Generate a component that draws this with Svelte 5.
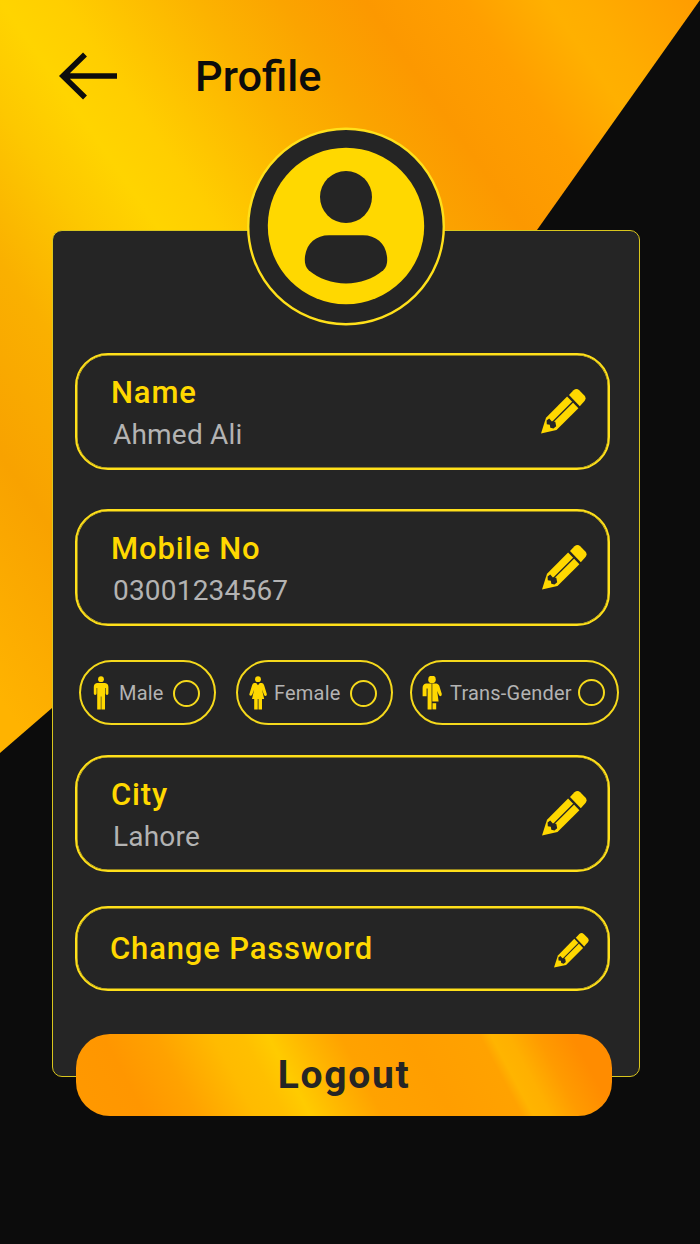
<script>
    let gender = $state('');

    const genders = [
        { id: 'male', label: 'Male' },
        { id: 'female', label: 'Female' },
        { id: 'trans', label: 'Trans-Gender' },
    ];
</script>

{#snippet pencil(size)}
    <svg class="pencil" width={size} height={size} viewBox="0 0 45 45">
        <path fill="#ffd800" d="M28 6 32.5 1.3Q35.5-1 38.2 1.2L43.4 6.4Q45.6 9 43.5 12L38.8 17.2Z"/>
        <path fill="#ffd800" d="M26.1 7.4 5 28.8 0 44.4 15.5 41.1 37.4 19.2Z"/>
        <path stroke="#252525" stroke-width="1.3" d="M31.8 13 11 33.8"/>
        <path fill="#252525" d="M5.6 31.4 8.2 29.6 10.9 32.5 14.3 32.8 15.2 37.2 12.5 39.5 9.3 38.7 8.8 35.8 5.8 35.2Z"/>
    </svg>
{/snippet}

{#snippet field(label, value)}
    <div class="field {label.toLowerCase()}">
        <div class="text">
            <div class="label">{label}</div>
            <div class="value">{value}</div>
        </div>
        {@render pencil(45)}
    </div>
{/snippet}

{#snippet person(id)}
    <svg class="person" width="20" height="34" viewBox="0 0 20 34" fill="#ffd800">
        {#if id === 'male'}
            <circle cx="10" cy="3.2" r="2.9"/>
            <path d="M6 7H14Q17.4 7.4 17.4 11V17.5Q17.4 18.9 16 18.9 14.6 18.9 14.6 17.5V12H14V33.4H10.4V20.5H9.8V33.4H6.2V12H5.6V17.5Q5.6 18.9 4.2 18.9 2.8 18.9 2.8 17.5V11Q2.8 7.4 6 7Z"/>
        {:else if id === 'female'}
            <circle cx="10" cy="3.2" r="2.9"/>
            <path d="M6 7H8.2L10 9.2 11.8 7H14Q15.6 7.2 16.2 9.5L18.8 18Q19 19.7 17.6 19.9 16.5 19.9 16 18.7L14 13.5 16.2 23H14V33.4H10.5V23H9.7V33.4H6.2V23H4L6.2 13.5 4.2 18.7Q3.6 19.9 2.5 19.8 1 19.6 1.4 18L4 9.5Q4.6 7.2 6 7Z"/>
        {:else}
            <circle cx="10" cy="3.4" r="3.8"/>
            <path d="M4 7.6H9.6V33.4H5.6V12.5H4.6V20.3H.6V12Q.6 8.2 4 7.6Z"/>
            <path d="M10.3 7.6H14.5Q17 8 17.8 11.5L19.8 18Q20 20 18.4 20.2 17.3 20.2 16.8 18.8L15.2 15 16.6 25.4H10.3Z"/>
            <path d="M10.5 27.2H14.2V33.4H10.5Z"/>
        {/if}
    </svg>
{/snippet}

<div class="screen">
    <svg class="backdrop" width="700" height="1244" viewBox="0 0 700 1244">
        <defs>
            <linearGradient id="gold" gradientUnits="userSpaceOnUse" x1="-328" y1="228" x2="492" y2="-342">
                <stop offset="0" stop-color="#ffb300"/>
                <stop offset="0.14" stop-color="#f8a200"/>
                <stop offset="0.25" stop-color="#fab000"/>
                <stop offset="0.34" stop-color="#fdc800"/>
                <stop offset="0.4" stop-color="#ffd400"/>
                <stop offset="0.45" stop-color="#ffce00"/>
                <stop offset="0.56" stop-color="#fcb300"/>
                <stop offset="0.63" stop-color="#fba400"/>
                <stop offset="0.7" stop-color="#fc9800"/>
                <stop offset="0.78" stop-color="#ff9f00"/>
                <stop offset="0.85" stop-color="#ffb000"/>
                <stop offset="0.88" stop-color="#ffad00"/>
                <stop offset="0.98" stop-color="#ff9b00"/>
            </linearGradient>
        </defs>
        <path fill="url(#gold)" d="M0 0H700L537 230 52 708 0 753Z"/>
    </svg>

    <header>
        <svg width="60" height="48" viewBox="0 0 60 48" fill="none" stroke="#0c0c0c" stroke-width="5.6">
            <path d="M27 2.5 5 24 27 45.5M4 24H59"/>
        </svg>
        <h1>Profile</h1>
    </header>

    <main class="card">
        <svg class="avatar" width="198" height="199" viewBox="0 0 198 199">
            <circle cx="99" cy="99.5" r="97.8" fill="#252525" stroke="#ffe01a" stroke-width="2.4"/>
            <circle cx="99" cy="99" r="78.2" fill="#ffd800"/>
            <circle cx="99" cy="70" r="26" fill="#252525"/>
            <path fill="#252525" d="M82 108.3H116C130 108.3 140.2 118 140.2 133Q140.2 139.5 136.3 143.3C126 152 113 156.5 99 156.5S72 152 61.7 143.3Q57.8 139.5 57.8 133C57.8 118 68 108.3 82 108.3Z"/>
        </svg>

        {@render field('Name', 'Ahmed Ali')}
        {@render field('Mobile No', '03001234567')}

        <div class="genders">
            {#each genders as g}
                <button class="pill {g.id}" onclick={() => gender = g.id}>
                    {@render person(g.id)}
                    <span>{g.label}</span>
                    <i class:on={gender === g.id}></i>
                </button>
            {/each}
        </div>

        {@render field('City', 'Lahore')}

        <div class="field password">
            <div class="label">Change Password</div>
            {@render pencil(35)}
        </div>

        <button class="logout">Logout</button>
    </main>
</div>

<style>
    :global(body) {
        margin: 0;
        background: #0c0c0c;
    }

    .screen {
        position: relative;
        box-sizing: border-box;
        width: 700px;
        height: 1244px;
        overflow: hidden;
        background: #0c0c0c;
        font-family: Roboto, sans-serif;
    }

    .backdrop {
        position: absolute;
        left: 0;
        top: 0;
    }

    header {
        position: relative;
        display: flex;
        align-items: center;
        height: 152px;
        padding-left: 58px;
    }

    h1 {
        margin: 1px 0 0 77px;
        font-size: 43.3px;
        font-weight: 500;
        line-height: 50px;
        color: #0c0c0c;
    }

    .card {
        position: relative;
        display: flex;
        flex-direction: column;
        box-sizing: border-box;
        width: 588px;
        height: 847px;
        margin: 78px 0 0 52px;
        padding: 0 22px;
        border: 1px solid #d9c61d;
        border-radius: 10px;
        background: #252525;
    }

    .avatar {
        flex: none;
        margin: -104px 0 27px 172px;
    }

    .field {
        display: flex;
        flex: none;
        align-items: center;
        justify-content: space-between;
        box-sizing: border-box;
        width: 535px;
        height: 117px;
        margin-bottom: 39px;
        padding: 0 21px 0 34px;
        border: 2px solid #ffe01a;
        border-radius: 33px;
        box-shadow: inset 0 0 0 0.5px #ffe01a;
    }

    .name {
        padding-right: 22px;
    }

    .text {
        padding-top: 3px;
    }

    .label {
        font-size: 31px;
        font-weight: 500;
        line-height: 43px;
        letter-spacing: 0.85px;
        color: #ffd800;
    }

    .value {
        padding-left: 2px;
        font-size: 28px;
        line-height: 42px;
        letter-spacing: 0.2px;
        color: #b3b3b3;
    }

    .genders {
        display: flex;
        flex: none;
        width: 540px;
        margin: -5px 0 30px 4px;
    }

    .pill {
        display: flex;
        align-items: center;
        box-sizing: border-box;
        height: 65px;
        padding: 0;
        border: 2px solid #f5d91c;
        border-radius: 33px;
        background: none;
        font: 20px Roboto, sans-serif;
        letter-spacing: 0.2px;
        color: #b3b3b3;
    }

    .male { width: 137px; }
    .female { width: 157px; margin-left: 20px; }
    .trans { width: 209px; margin-left: 17px; }

    .person {
        flex: none;
        margin: 0 8px 0 10px;
    }

    .female .person { margin-right: 6px; }

    .pill i {
        box-sizing: border-box;
        width: 27px;
        height: 27px;
        margin: 1px 14px 0 auto;
        border: 2px solid #f5d91c;
        border-radius: 50%;
    }

    .trans i { margin: 0 12px 0 auto; }

    .pill i.on {
        background: #ffd800;
    }

    .password {
        height: 85px;
        margin-top: -5px;
        padding-left: 33px;
        padding-right: 19px;
    }

    .password .pencil {
        margin-top: 3px;
    }

    .logout {
        flex: none;
        width: 536px;
        height: 82px;
        margin: 4px 0 0 1px;
        padding: 0;
        border: 0;
        border-radius: 34px;
        background: linear-gradient(62deg, #ff9900 0%, #ff9600 12%, #ffa200 21%, #ffbb00 31%, #ffbf00 36%, #ffcb00 40.5%, #ffb800 46%, #ffa200 53%, #ff9e00 65%, #ffa200 77%, #ffb400 79%, #ffb000 82%, #ff9b00 87%, #ff8c00 93%, #ff8c00 100%);
        font: 700 39px Roboto, sans-serif;
        letter-spacing: 1.7px;
        color: #252525;
    }
</style>
